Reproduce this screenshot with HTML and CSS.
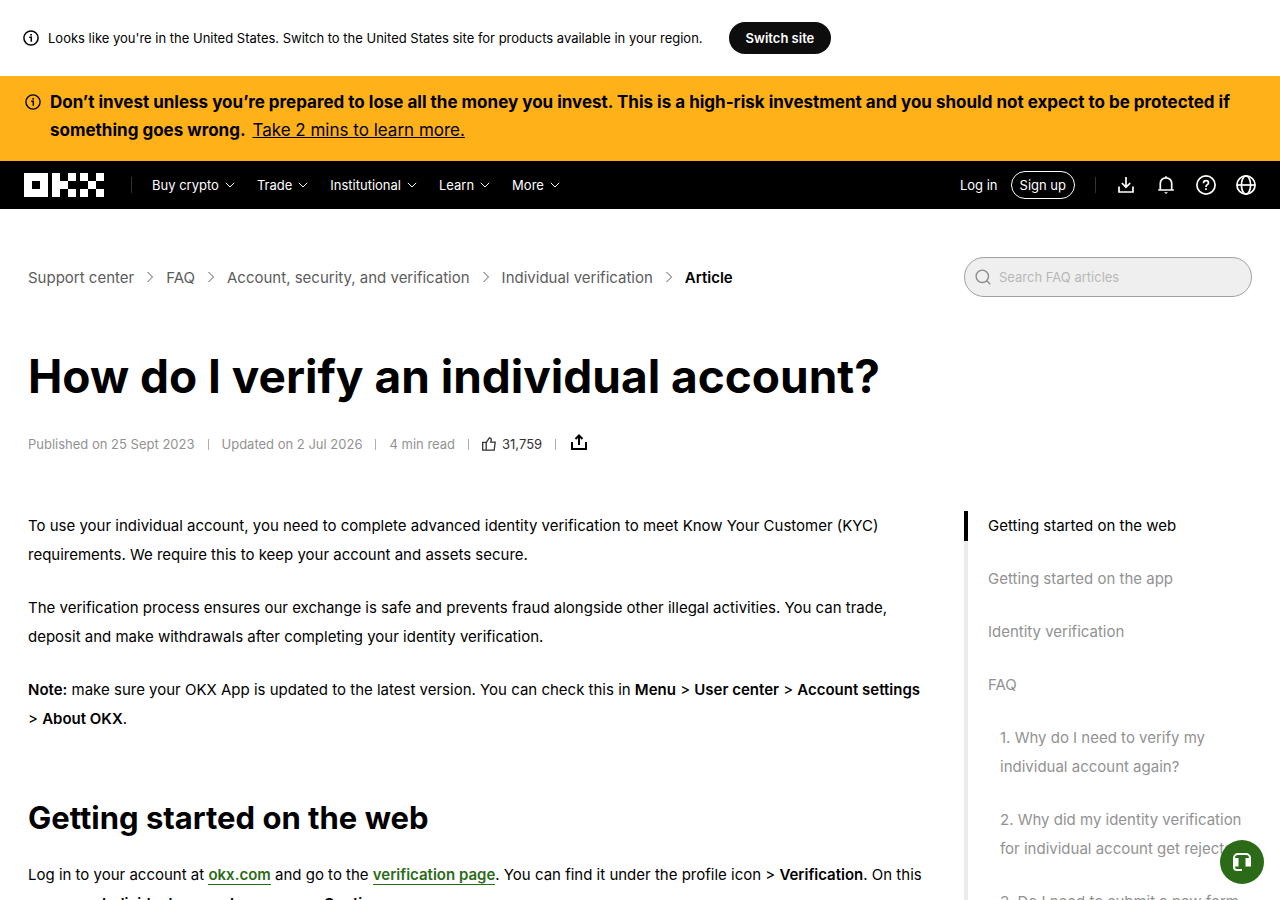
FILE: index.html
```html
<!DOCTYPE html>
<html lang="en">
<head>
    <meta charset="UTF-8">
    <meta name="viewport" content="width=device-width, initial-scale=1.0">
    <title>How do I verify an individual account? | OKX</title>
    <link rel="stylesheet" href="styles.css">
</head>
<body>
    <div class="region-bar">
        <svg class="info-icon" viewBox="0 0 16 16" width="16" height="16" fill="none" stroke="currentColor">
            <circle cx="8" cy="8" r="7.1" stroke-width="1.5"/>
            <path d="M6.2 7.3h2.1v4.5" stroke-width="1.5"/>
            <path d="M7.3 4.8h1.7" stroke-width="1.6"/>
        </svg>
        <span class="region-text">Looks like you're in the United States. Switch to the United States site for products available in your region.</span>
        <button type="button" class="switch-button">Switch site</button>
    </div>

    <div class="risk-bar">
        <svg class="info-icon" viewBox="0 0 16 16" width="16" height="16" fill="none" stroke="currentColor">
            <circle cx="8" cy="8" r="7.1" stroke-width="1.4"/>
            <path d="M6.2 7.3h2.1v4.5" stroke-width="1.4"/>
            <path d="M7.3 4.8h1.7" stroke-width="1.5"/>
        </svg>
        <p><strong>Don’t invest unless you’re prepared to lose all the money you invest. This is a high-risk investment and you should not expect to be protected if something goes wrong.</strong> <a href="#">Take 2 mins to learn more.</a></p>
    </div>

    <header class="header">
        <a href="#" class="logo" aria-label="OKX">
            <svg viewBox="0 0 80 24" width="80" height="24" fill="currentColor" shape-rendering="crispEdges">
                <path fill-rule="evenodd" d="M0 0h24v24H0zM8 8v8h8V8z"/>
                <path d="M28 0h8v8h8v8h-8v8h-8zM44 0h8v8h-8zM44 16h8v8h-8z"/>
                <path d="M56 0h8v8h-8zM72 0h8v8h-8zM64 8h8v8h-8zM56 16h8v8h-8zM72 16h8v8h-8z"/>
            </svg>
        </a>
        <span class="header-line"></span>
        <nav class="nav">
            <a href="#">Buy crypto <svg class="chevron" viewBox="0 0 10 6" width="10" height="6"><path d="M.8.8 5 5 9.2.8"/></svg></a>
            <a href="#">Trade <svg class="chevron" viewBox="0 0 10 6" width="10" height="6"><path d="M.8.8 5 5 9.2.8"/></svg></a>
            <a href="#">Institutional <svg class="chevron" viewBox="0 0 10 6" width="10" height="6"><path d="M.8.8 5 5 9.2.8"/></svg></a>
            <a href="#">Learn <svg class="chevron" viewBox="0 0 10 6" width="10" height="6"><path d="M.8.8 5 5 9.2.8"/></svg></a>
            <a href="#">More <svg class="chevron" viewBox="0 0 10 6" width="10" height="6"><path d="M.8.8 5 5 9.2.8"/></svg></a>
        </nav>
        <div class="header-right">
            <a href="#" class="login">Log in</a>
            <a href="#" class="signup">Sign up</a>
            <span class="header-line"></span>
            <div class="tools">
                <button type="button" aria-label="Download">
                    <svg viewBox="0 0 20 20" width="20" height="20"><path d="M10 2v10M5.8 8l4.2 4.2L14.2 8M3 11.500v5.500h14v-5.500"/></svg>
                </button>
                <button type="button" aria-label="Notifications">
                    <svg viewBox="0 0 20 20" width="20" height="20"><path d="M4.3 15V8.500a5.700 5.700 0 0 1 11.400 0V15M2.200 15h15.600M10 1.200V3"/><path d="M8 17.200h4L10 19z" fill="currentColor" stroke="none"/></svg>
                </button>
                <button type="button" aria-label="Help">
                    <svg viewBox="0 0 20 20" width="20" height="20"><circle cx="10" cy="10" r="9.1"/><path d="M7.500 8.200C7.500 6.600 8.600 5.700 10 5.700s2.500.9 2.500 2.200c0 1.700-2.500 1.900-2.500 3.700v.4M10 13.200v1.700"/></svg>
                </button>
                <button type="button" aria-label="Language">
                    <svg viewBox="0 0 20 20" width="20" height="20"><circle cx="10" cy="10" r="9.1"/><ellipse cx="10" cy="10" rx="4.6" ry="9.1"/><path d="M1 10h18"/></svg>
                </button>
            </div>
        </div>
    </header>

    <main class="page">
        <div class="top-row">
            <nav class="breadcrumb">
                <a href="#">Support center</a>
                <svg viewBox="0 0 8 12" width="8" height="12"><path d="m1.500 1 5 5-5 5"/></svg>
                <a href="#">FAQ</a>
                <svg viewBox="0 0 8 12" width="8" height="12"><path d="m1.500 1 5 5-5 5"/></svg>
                <a href="#">Account, security, and verification</a>
                <svg viewBox="0 0 8 12" width="8" height="12"><path d="m1.500 1 5 5-5 5"/></svg>
                <a href="#">Individual verification</a>
                <svg viewBox="0 0 8 12" width="8" height="12"><path d="m1.500 1 5 5-5 5"/></svg>
                <span class="current">Article</span>
            </nav>
            <label class="search">
                <svg viewBox="0 0 16 16" width="16" height="16"><circle cx="7.3" cy="7.3" r="6.2"/><path d="m11.800 11.800 3.400 3.400"/></svg>
                <input type="text" placeholder="Search FAQ articles" aria-label="Search FAQ articles">
            </label>
        </div>

        <h1>How do I verify an individual account?</h1>

        <div class="meta">
            <span>Published on 25 Sept 2023</span>
            <span class="meta-line"></span>
            <span>Updated on 2 Jul 2026</span>
            <span class="meta-line"></span>
            <span>4 min read</span>
            <span class="meta-line"></span>
            <button type="button" class="like">
                <svg viewBox="0 0 14 14" width="14" height="14"><path d="M.7 5.300h3.500v7.900H.7zM4.200 5.600 7.300.8c1.500.1 2.200 1 1.900 2.300l-.4 2h4.400l-1 8.100h-8"/></svg>
                31,759
            </button>
            <span class="meta-line"></span>
            <button type="button" class="share" aria-label="Share">
                <svg viewBox="0 0 16 16" width="16" height="16"><path d="M8 11V1.500M4.500 5 8 1.500 11.500 5M1 8v7h14V8"/></svg>
            </button>
        </div>

        <div class="columns">
            <article class="article">
                <p>To use your individual account, you need to complete advanced identity verification to meet Know Your Customer (KYC) requirements. We require this to keep your account and assets secure.</p>
                <p>The verification process ensures our exchange is safe and prevents fraud alongside other illegal activities. You can trade, deposit and make withdrawals after completing your identity verification.</p>
                <p><strong>Note:</strong> make sure your OKX App is updated to the latest version. You can check this in <strong>Menu</strong> &gt; <strong>User center</strong> &gt; <strong>Account settings</strong> &gt; <strong>About OKX</strong>.</p>
                <h2>Getting started on the web</h2>
                <p>Log in to your account at <a href="#">okx.com</a> and go to the <a href="#">verification page</a>. You can find it under the profile icon &gt; <strong>Verification</strong>. On this page, see <strong>Individual account</strong> or press on <strong>Continue</strong>.</p>
            </article>

            <nav class="toc">
                <a href="#" class="active">Getting started on the web</a>
                <a href="#">Getting started on the app</a>
                <a href="#">Identity verification</a>
                <a href="#">FAQ</a>
                <a href="#" class="sub">1. Why do I need to verify my individual account again?</a>
                <a href="#" class="sub">2. Why did my identity verification for individual account get rejected?</a>
                <a href="#" class="sub">3. Do I need to submit a new form</a>
            </nav>
        </div>
    </main>

    <button type="button" class="support" aria-label="Customer support">
        <svg viewBox="0 0 20 20" width="20" height="20"><path d="M2 12V6a4 4 0 0 1 4-4h8a4 4 0 0 1 4 4v6M2 11v4a3 3 0 0 0 3 3h5" fill="none" stroke="currentColor" stroke-width="2"/><path d="M1 6h5.500v8.500H1zM13.500 6H19v8.500h-5.500z" fill="currentColor"/></svg>
    </button>
</body>
</html>
```
FILE: styles.css
```css
* {
    box-sizing: border-box;
}
body {
    margin: 0;
    font-family: Inter, "Liberation Sans", sans-serif;
    font-size: 15px;
    color: #000;
    background-color: #fff;
}
a {
    color: inherit;
    text-decoration: none;
}
button {
    padding: 0;
    border: none;
    background: none;
    color: inherit;
    font: inherit;
    cursor: pointer;
}
svg {
    display: block;
    flex: none;
}

/* top notices */
.region-bar {
    display: flex;
    align-items: center;
    padding: 22px 23px;
    font-size: 13px;
}
.region-text {
    margin: 0 26px 0 9px;
}
.switch-button {
    height: 32px;
    padding: 0 17px;
    border-radius: 16px;
    background-color: #0d0d0d;
    color: #fff;
    font-weight: 600;
}
.risk-bar {
    display: flex;
    gap: 9px;
    padding: 12px 25px 17px;
    background-color: #ffb11a;
    font-size: 17px;
    line-height: 28px;
}
.risk-bar .info-icon {
    margin-top: 6px;
}
.risk-bar p {
    margin: 0;
}
.risk-bar strong {
    font-weight: 700;
}
.risk-bar a {
    margin-left: 2px;
    text-decoration: underline;
}

/* header */
.header {
    display: flex;
    align-items: center;
    height: 48px;
    padding: 0 24px;
    background-color: #000;
    color: #fff;
    font-size: 13px;
}
.header-line {
    width: 1px;
    height: 16px;
    background-color: #333;
}
.header > .header-line {
    margin: 0 20px 0 27px;
}
.nav {
    display: flex;
    gap: 22px;
}
.nav a {
    display: flex;
    align-items: center;
    gap: 6px;
}
.chevron {
    fill: none;
    stroke: currentColor;
}
.header-right {
    display: flex;
    align-items: center;
    margin-left: auto;
}
.signup {
    margin: 0 20px 0 13px;
    padding: 0 8px;
    border: 1px solid #fff;
    border-radius: 14px;
    line-height: 26px;
}
.tools {
    display: flex;
    gap: 20px;
    margin-left: 20px;
}
.tools svg {
    fill: none;
    stroke: currentColor;
    stroke-width: 1.7;
}

/* article page */
.page {
    padding: 48px 28px 0;
}
.top-row {
    display: flex;
    align-items: center;
    justify-content: space-between;
}
.breadcrumb {
    display: flex;
    align-items: center;
    gap: 12px;
    color: #5c5c5c;
}
.breadcrumb svg {
    fill: none;
    stroke: currentColor;
}
.breadcrumb .current {
    color: #000;
    font-weight: 600;
}
.search {
    display: flex;
    align-items: center;
    gap: 8px;
    width: 288px;
    height: 40px;
    padding: 0 10px;
    border: 1px solid #a0a0a0;
    border-radius: 20px;
    background-color: #efefef;
}
.search svg {
    fill: none;
    stroke: #8c8c8c;
    stroke-width: 1.4;
}
.search input {
    flex: 1;
    min-width: 0;
    padding: 0;
    border: none;
    outline: none;
    background: none;
    font: inherit;
    font-size: 13px;
}
.search input::placeholder {
    color: #b8b8b8;
}
h1 {
    margin: 49px 0 27px;
    font-size: 46px;
    line-height: 60px;
    font-weight: 700;
}
.meta {
    display: flex;
    align-items: center;
    gap: 13px;
    height: 22px;
    color: #929292;
    font-size: 13px;
}
.meta-line {
    width: 1px;
    height: 11px;
    background-color: #b0b0b0;
}
.meta svg {
    fill: none;
    stroke: currentColor;
    stroke-width: 1.3;
}
.like {
    display: flex;
    align-items: center;
    gap: 6px;
    color: #333;
}
.share {
    color: #000;
}
.meta .share svg {
    margin: 0 2px 4px;
    stroke-width: 2;
}
.columns {
    display: grid;
    grid-template-columns: minmax(0, 1fr) 288px;
    gap: 32px;
    margin-top: 56px;
    line-height: 29px;
}
.article p {
    margin: 0 0 24px;
}
.article a {
    border-bottom: 1px solid #2b6b18;
    color: #2b6b18;
    font-weight: 600;
}
strong {
    font-weight: 600;
}
.article h2 {
    margin: 63px 0 20px;
    font-size: 31px;
    line-height: 44px;
    font-weight: 700;
}
.toc {
    color: #929292;
}
.toc a {
    display: block;
    padding: 0 0 24px 20px;
    border-left: 4px solid #ebebeb;
}
.toc .active {
    color: #000;
    border-image: linear-gradient(#000 30px, #ebebeb 30px) 1;
}
.toc .sub {
    padding-left: 32px;
}
.support {
    position: fixed;
    right: 16px;
    bottom: 16px;
    display: flex;
    align-items: center;
    justify-content: center;
    width: 44px;
    height: 44px;
    border-radius: 50%;
    background-color: #2b6b18;
    color: #fff;
}
```
